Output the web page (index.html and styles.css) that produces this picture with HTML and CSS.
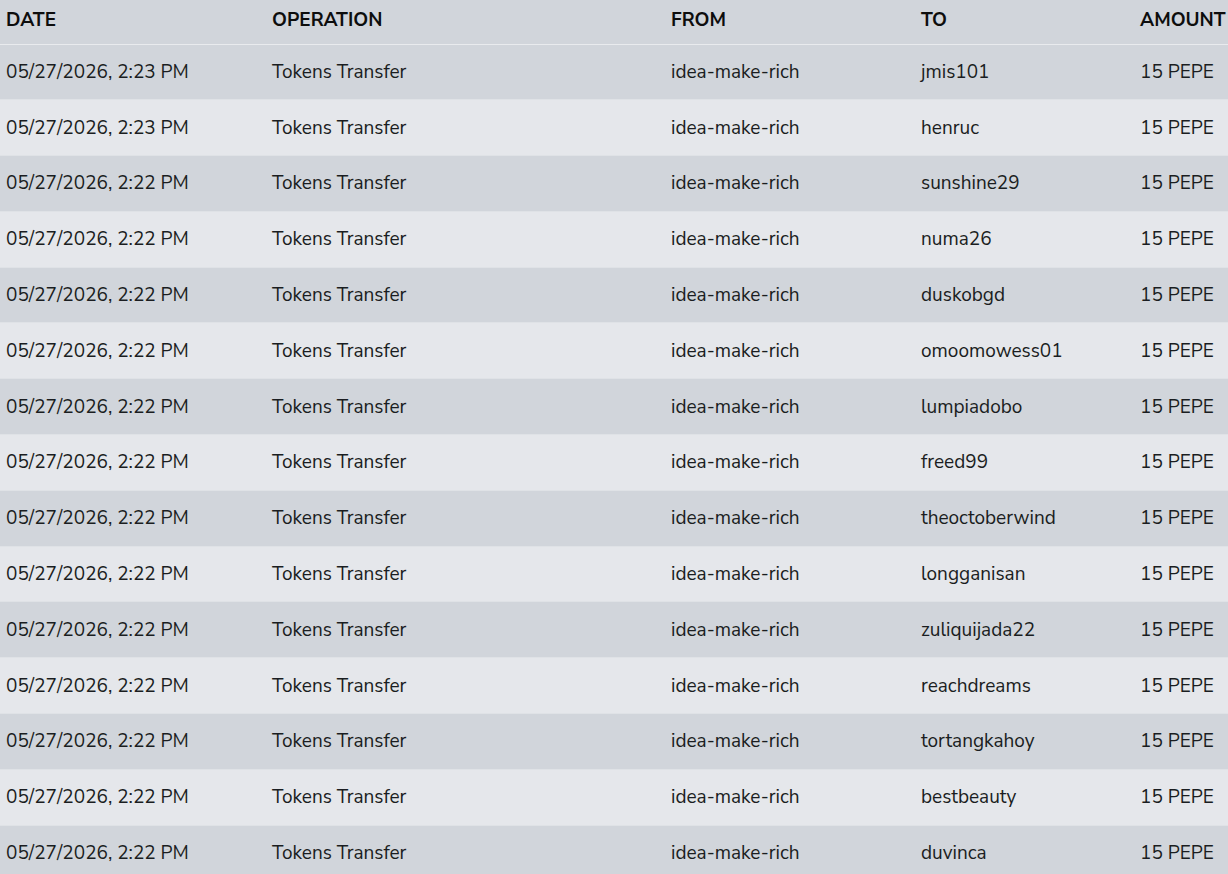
FILE: index.html
```html
<!DOCTYPE html>
<html lang="en">
<head>
    <meta charset="UTF-8">
    <meta name="viewport" content="width=device-width, initial-scale=1.0">
    <title>Token History</title>
    <link rel="stylesheet" href="styles.css">
</head>
<body>

    <div class="history">
        <table class="history-table">
            <thead>
                <tr>
                    <th class="col-date">DATE</th>
                    <th class="col-op">OPERATION</th>
                    <th class="col-from">FROM</th>
                    <th class="col-to">TO</th>
                    <th class="col-amount">AMOUNT</th>
                </tr>
            </thead>
            <tbody>
                <tr><td>05/27/2026, 2:23 PM</td><td>Tokens Transfer</td><td>idea-make-rich</td><td>jmis101</td><td>15 PEPE</td></tr>
                <tr><td>05/27/2026, 2:23 PM</td><td>Tokens Transfer</td><td>idea-make-rich</td><td>henruc</td><td>15 PEPE</td></tr>
                <tr><td>05/27/2026, 2:22 PM</td><td>Tokens Transfer</td><td>idea-make-rich</td><td>sunshine29</td><td>15 PEPE</td></tr>
                <tr><td>05/27/2026, 2:22 PM</td><td>Tokens Transfer</td><td>idea-make-rich</td><td>numa26</td><td>15 PEPE</td></tr>
                <tr><td>05/27/2026, 2:22 PM</td><td>Tokens Transfer</td><td>idea-make-rich</td><td>duskobgd</td><td>15 PEPE</td></tr>
                <tr><td>05/27/2026, 2:22 PM</td><td>Tokens Transfer</td><td>idea-make-rich</td><td>omoomowess01</td><td>15 PEPE</td></tr>
                <tr><td>05/27/2026, 2:22 PM</td><td>Tokens Transfer</td><td>idea-make-rich</td><td>lumpiadobo</td><td>15 PEPE</td></tr>
                <tr><td>05/27/2026, 2:22 PM</td><td>Tokens Transfer</td><td>idea-make-rich</td><td>freed99</td><td>15 PEPE</td></tr>
                <tr><td>05/27/2026, 2:22 PM</td><td>Tokens Transfer</td><td>idea-make-rich</td><td>theoctoberwind</td><td>15 PEPE</td></tr>
                <tr><td>05/27/2026, 2:22 PM</td><td>Tokens Transfer</td><td>idea-make-rich</td><td>longganisan</td><td>15 PEPE</td></tr>
                <tr><td>05/27/2026, 2:22 PM</td><td>Tokens Transfer</td><td>idea-make-rich</td><td>zuliquijada22</td><td>15 PEPE</td></tr>
                <tr><td>05/27/2026, 2:22 PM</td><td>Tokens Transfer</td><td>idea-make-rich</td><td>reachdreams</td><td>15 PEPE</td></tr>
                <tr><td>05/27/2026, 2:22 PM</td><td>Tokens Transfer</td><td>idea-make-rich</td><td>tortangkahoy</td><td>15 PEPE</td></tr>
                <tr><td>05/27/2026, 2:22 PM</td><td>Tokens Transfer</td><td>idea-make-rich</td><td>bestbeauty</td><td>15 PEPE</td></tr>
                <tr><td>05/27/2026, 2:22 PM</td><td>Tokens Transfer</td><td>idea-make-rich</td><td>duvinca</td><td>15 PEPE</td></tr>
            </tbody>
        </table>
    </div>

</body>
</html>
```

FILE: styles.css
```css
body {
    margin: 0;
    font-family: 'Nunito Sans', 'Lato', 'Noto Sans', sans-serif;
    background-color: #e5e7eb;
    color: #1a1d21;
    overflow: hidden;
}

.history {
    width: 1228px;
    overflow: hidden;
}

.history-table {
    border-collapse: collapse;
    width: 1300px;
    table-layout: fixed;
}

.history-table th {
    height: 44px;
    padding: 0 6px 4px;
    text-align: left;
    font-size: 19px;
    font-weight: 700;
    background-color: #d1d5db;
    color: #0d0d0d;
    border-bottom: 1px solid #e9ebee;
    box-sizing: border-box;
    vertical-align: middle;
}

.col-date { width: 266px; }
.col-op { width: 399px; }
.col-from { width: 250px; }
.col-to { width: 219px; }
.col-amount { width: 166px; }

.history-table td {
    height: 55.8px;
    padding: 0 6px;
    font-size: 19px;
    box-sizing: border-box;
    border-bottom: 1px solid #dfe2e6;
    vertical-align: middle;
    white-space: nowrap;
}

.history-table tbody tr:nth-child(odd) {
    background-color: #d1d5db;
}

.history-table tbody tr:nth-child(even) {
    background-color: #e5e7eb;
}
```
